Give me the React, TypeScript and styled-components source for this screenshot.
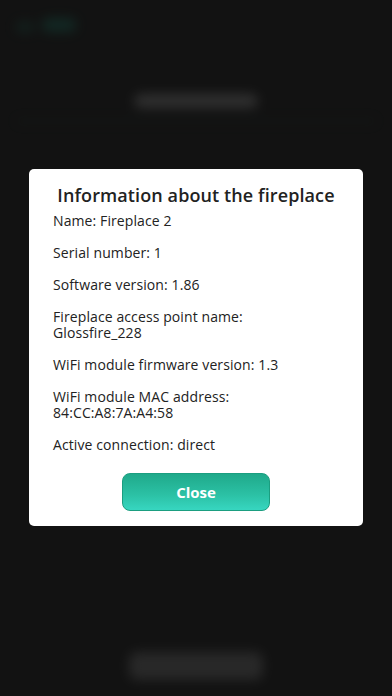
import styled, { createGlobalStyle } from "styled-components";

const GlobalStyle = createGlobalStyle`
  html, body {
    margin: 0;
    padding: 0;
    background: #121212;
  }
  * {
    box-sizing: border-box;
  }
`;

const Screen = styled.div`
  position: relative;
  width: 392px;
  height: 696px;
  overflow: hidden;
  background: #121212;
  font-family: "Open Sans", "DejaVu Sans", sans-serif;
`;

// the page behind the dialog, dimmed and blurred
const Backdrop = styled.div`
  height: 100%;
  display: flex;
  flex-direction: column;
  filter: blur(6px);
  opacity: 0.45;
`;

const TopBar = styled.div`
  height: 56px;
  padding: 18px 0 0 16px;
  display: flex;
  align-items: flex-start;
  gap: 8px;
`;

const BackMark = styled.div`
  width: 18px;
  height: 10px;
  margin-top: 4px;
  background: #15352d;
  border-radius: 4px;
`;

const BackLabel = styled.div`
  width: 34px;
  height: 14px;
  background: #14443a;
  border-radius: 6px;
`;

const PageTitle = styled.div`
  align-self: center;
  margin-top: 38px;
  width: 124px;
  height: 14px;
  border-radius: 7px;
  background: #555555;
`;

const TitleRule = styled.div`
  margin: 12px 16px 0;
  height: 2px;
  background: #1a2a26;
`;

const Spacer = styled.div`
  flex: 1;
`;

const BottomButton = styled.div`
  align-self: center;
  margin-bottom: 16px;
  width: 134px;
  height: 28px;
  border-radius: 8px;
  background: #444444;
`;

const Overlay = styled.div`
  position: absolute;
  inset: 0;
  display: flex;
  align-items: flex-start;
  justify-content: center;
  padding-top: 169px;
`;

const Dialog = styled.div`
  width: 334px;
  background: #ffffff;
  border-radius: 5px;
  padding: 14px 24px 15px;
  color: #222222;
  display: flex;
  flex-direction: column;
`;

const Title = styled.h2`
  margin: 0 0 6px;
  text-align: center;
  font-size: 18px;
  line-height: 24px;
  font-weight: 600;
  letter-spacing: 0.1px;
`;

const InfoList = styled.div`
  display: flex;
  flex-direction: column;
  gap: 16px;
`;

const InfoRow = styled.div`
  display: flex;
  flex-direction: column;
`;

const InfoLine = styled.span`
  display: block;
  font-size: 14px;
  line-height: 16px;
  font-weight: 400;
  letter-spacing: 0.1px;
`;

const CloseButton = styled.button`
  align-self: center;
  margin-top: 20px;
  width: 148px;
  height: 38px;
  border: 1px solid #1b9e80;
  border-radius: 8px;
  background: linear-gradient(180deg, #1fa98a 0%, #2cc2a6 60%, #37d6c0 100%);
  color: #ffffff;
  font-family: inherit;
  font-size: 15px;
  font-weight: 700;
  cursor: pointer;
`;

const rows: string[][] = [
  ["Name: Fireplace 2"],
  ["Serial number: 1"],
  ["Software version: 1.86"],
  ["Fireplace access point name:", "Glossfire_228"],
  ["WiFi module firmware version: 1.3"],
  ["WiFi module MAC address:", "84:CC:A8:7A:A4:58"],
  ["Active connection: direct"],
];

export default function App() {
  return (
    <Screen>
      <GlobalStyle />
      <Backdrop>
        <TopBar>
          <BackMark />
          <BackLabel />
        </TopBar>
        <PageTitle />
        <TitleRule />
        <Spacer />
        <BottomButton />
      </Backdrop>
      <Overlay>
        <Dialog>
          <Title>Information about the fireplace</Title>
          <InfoList>
            {rows.map((lines, i) => (
              <InfoRow key={i}>
                {lines.map((line, j) => (
                  <InfoLine key={j}>{line}</InfoLine>
                ))}
              </InfoRow>
            ))}
          </InfoList>
          <CloseButton>Close</CloseButton>
        </Dialog>
      </Overlay>
    </Screen>
  );
}
